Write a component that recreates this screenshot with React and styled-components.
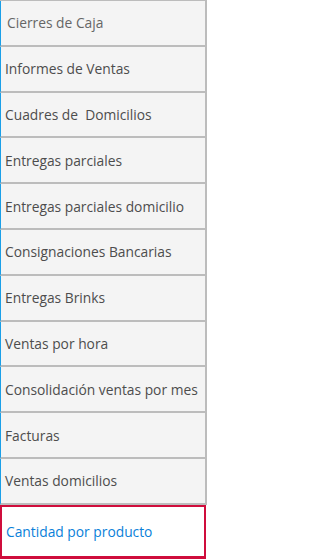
import React from "react";
import styled, { createGlobalStyle } from "styled-components";

const Global = createGlobalStyle`
  html, body {
    margin: 0;
    padding: 0;
    background: #fff;
  }
`;

const Menu = styled.ul`
  list-style: none;
  margin: 0;
  padding: 0;
  width: 207px;
  border-top: 1px solid #bcbcbc;
  font-family: "Open Sans", "Liberation Sans", sans-serif;
  font-size: 13.8px;
`;

const Item = styled.li`
  box-sizing: border-box;
  height: 45.8px;
  display: flex;
  align-items: center;
  padding-left: ${(p) => (p.$indent ? "6px" : "4px")};
  background: #f4f4f4;
  color: ${(p) => (p.$muted ? "#666666" : "#4d4d4d")};
  border-left: 1px solid #1a9fe8;
  border-right: 2px solid #bcbcbc;
  border-bottom: 2px solid #bcbcbc;
  white-space: pre;
`;

const ActiveItem = styled.li`
  box-sizing: border-box;
  width: 206px;
  height: 54px;
  display: flex;
  align-items: center;
  padding-left: 4px;
  background: #fff;
  color: #0a7fd9;
  border: 2px solid #cf0d3c;
  border-bottom-width: 3px;
`;

const items = [
  "Cierres de Caja",
  "Informes de Ventas",
  "Cuadres de  Domicilios",
  "Entregas parciales",
  "Entregas parciales domicilio",
  "Consignaciones Bancarias",
  "Entregas Brinks",
  "Ventas por hora",
  "Consolidación ventas por mes",
  "Facturas",
  "Ventas domicilios",
];

export default function App() {
  return (
    <>
      <Global />
      <Menu>
        {items.map((label, i) => (
          <Item key={label} $indent={i === 0} $muted={i === 0}>
            {label}
          </Item>
        ))}
        <ActiveItem>Cantidad por producto</ActiveItem>
      </Menu>
    </>
  );
}
